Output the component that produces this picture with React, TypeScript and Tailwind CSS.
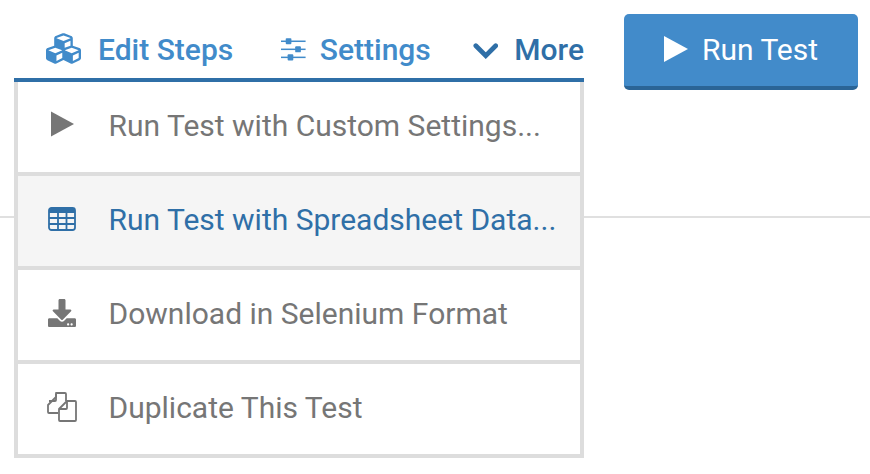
import { FaCubes, FaDownload } from "react-icons/fa";

function Play({ className }: { className: string }) {
  return (
    <svg viewBox="0 0 24 26" className={className} fill="currentColor">
      <polygon points="0,0 24,13 0,26" />
    </svg>
  );
}

function Sliders() {
  return (
    <svg viewBox="0 0 26 25" className="w-[26px] h-[25px] mr-[14px]" fill="currentColor">
      <rect x="0" y="3" width="26" height="1.6" />
      <rect x="0" y="11.5" width="26" height="1.6" />
      <rect x="0" y="20" width="26" height="1.6" />
      <rect x="5" y="0.5" width="6" height="6.5" rx="1" />
      <rect x="15" y="9" width="6" height="6.5" rx="1" />
      <rect x="7" y="17.5" width="6" height="6.5" rx="1" />
    </svg>
  );
}

function Chevron() {
  return (
    <svg viewBox="0 0 27 17" className="w-[27px] h-[17px] mt-[3px] mr-[16px] text-[#2f6fa7]" fill="none" stroke="currentColor" strokeWidth="5" strokeLinecap="round">
      <path d="M3 3.500L13.500 14L24 3.500" />
    </svg>
  );
}

function TableIcon() {
  return (
    <svg viewBox="0 0 28 24" className="w-[28px] h-[24px]" fill="none" stroke="currentColor" strokeWidth="1.800">
      <rect x="1" y="1" width="26" height="22" rx="2.500" />
      <path d="M1 4H27" strokeWidth="4" />
      <path d="M1 11H27M1 17H27M10 6V23M18.500 6V23" />
    </svg>
  );
}

function CopyIcon() {
  return (
    <svg viewBox="0 0 30 30" className="w-[30px] h-[30px]" fill="none" stroke="currentColor" strokeWidth="1.800" strokeLinejoin="round">
      <path d="M11 21H2a1 1 0 0 1-1-1v-7l8-8h0V1h9a1 1 0 0 1 1 1v7" />
      <path d="M9 2v6a1 1 0 0 1-1 1H2" />
      <path d="M13 29a1 1 0 0 1-1-1v-11l8-8h8a1 1 0 0 1 1 1v18a1 1 0 0 1-1 1z" />
      <path d="M20 9v7a1 1 0 0 1-1 1h-7" />
    </svg>
  );
}

const items = [
  { label: "Run Test with Custom Settings...", icon: <Play className="w-[23px] h-[26px] mb-[2px]" /> },
  { label: "Run Test with Spreadsheet Data...", icon: <TableIcon />, active: true },
  { label: "Download in Selenium Format", icon: <FaDownload className="w-[28px] h-[28px]" /> },
  { label: "Duplicate This Test", icon: <CopyIcon /> },
];

export default function App() {
  return (
    <div className="relative w-[870px] h-[474px] overflow-hidden bg-white font-['Roboto',sans-serif]">
      {/* toolbar */}
      <div className="flex items-start pt-[14px] pl-[14px]">
        <div className="relative w-[570px]">
          <div className="flex items-center h-[58px] pt-[6px] pl-[32px] text-[30px] font-medium text-[#418bca] border-b-4 border-[#2f6fa7] box-content whitespace-nowrap">
            <FaCubes className="w-[37px] h-[37px] mr-[17px] -mt-[1px]" />
            <span className="mr-[48px]">Edit Steps</span>
            <Sliders />
            <span className="mr-[42px]">Settings</span>
            <Chevron />
            <span className="text-[#2f6fa7]">More</span>
          </div>

          {/* dropdown */}
          <div className="absolute z-10 left-0 top-[68px] w-[570px] bg-white border-x-4 border-[#dddddd]">
            {items.map((item) => (
              <div
                key={item.label}
                className={`flex items-center h-[94px] pb-[4px] border-b-4 border-[#dddddd] text-[30px] ${
                  item.active ? "bg-[#f5f5f5] text-[#2f6fa7]" : "text-[#767676]"
                }`}
              >
                <div className="flex justify-center items-center w-[91px] pr-[3px]">{item.icon}</div>
                <span className="-ml-[0.5px]">{item.label}</span>
              </div>
            ))}
          </div>
        </div>

        <button className="ml-[40px] flex items-center justify-center w-[234px] h-[76px] pb-[2px] rounded-[5px] bg-[#428bca] border-b-4 border-[#2a6496] text-white text-[30px] font-normal">
          <Play className="w-[24px] h-[26px] mr-[14px]" />
          Run Test
        </button>
      </div>

      {/* divider behind the menu */}
      <div className="mt-[126px] h-[2px] bg-[#e0e0e0]" />
    </div>
  );
}
